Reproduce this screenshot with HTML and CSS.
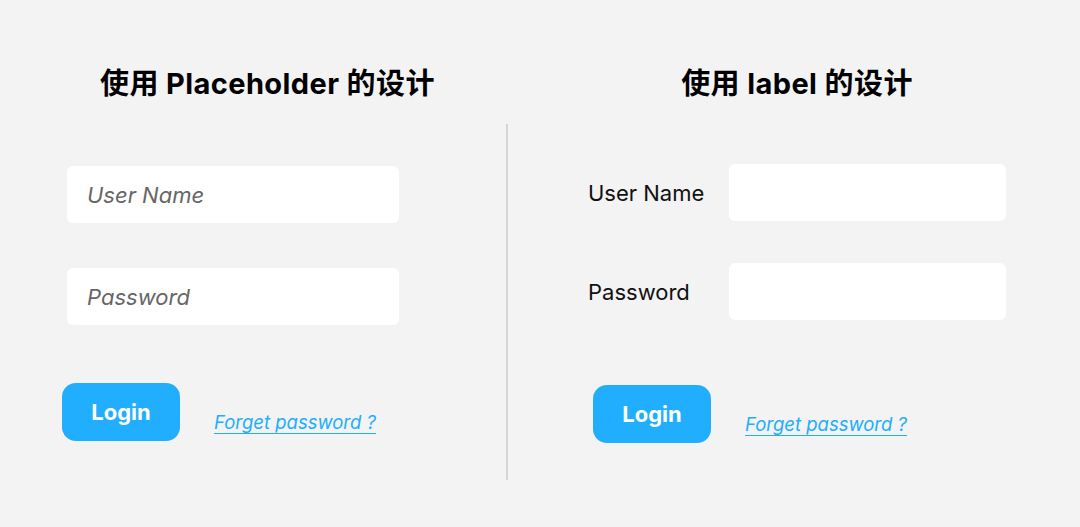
FILE: index.html
```html
<!DOCTYPE html>
<html lang="zh-CN">
<head>
  <meta charset="UTF-8" />
  <meta name="viewport" content="width=device-width, initial-scale=1.0"/>
  <title>Placeholder vs Label</title>
  <link rel="stylesheet" href="styles.css">
</head>
<body>
  <main class="compare">
    <section class="panel panel-placeholder">
      <h2 class="title">使用 Placeholder 的设计</h2>
      <div class="fields">
        <input class="field" type="text" placeholder="User Name">
        <input class="field" type="password" placeholder="Password">
      </div>
      <div class="actions">
        <button class="login">Login</button>
        <a class="forget" href="#">Forget password ?</a>
      </div>
    </section>

    <div class="divider"></div>

    <section class="panel panel-label">
      <h2 class="title">使用 label 的设计</h2>
      <div class="fields">
        <label class="row">
          <span class="label-text">User Name</span>
          <input class="field" type="text">
        </label>
        <label class="row">
          <span class="label-text">Password</span>
          <input class="field" type="password">
        </label>
      </div>
      <div class="actions">
        <button class="login">Login</button>
        <a class="forget" href="#">Forget password ?</a>
      </div>
    </section>
  </main>
</body>
</html>
```

FILE: styles.css
```css
:root {
  --bg: #f3f3f3;
  --text: #111;
  --muted: #666;
  --blue: #21aeff;
  --line: #d5d5d5;
}

body {
  margin: 0;
  padding: 0;
  height: 527px;
  overflow: hidden;
  background: var(--bg);
  color: var(--text);
  font-family: Inter, "Noto Sans CJK SC", sans-serif;
}

.compare {
  display: grid;
  grid-template-columns: 506px 2px 1fr;
  height: 100%;
}

.panel {
  display: flex;
  flex-direction: column;
  align-items: flex-start;
  padding-top: 66px;
}

.title {
  margin: 0;
  font-size: 29px;
  line-height: 35px;
  font-weight: 700;
  letter-spacing: 0.4px;
  color: #000;
}

.field {
  box-sizing: border-box;
  height: 57px;
  border: none;
  border-radius: 6px;
  background: #fff;
  padding: 0 20px;
  font-family: inherit;
  font-size: 22px;
  color: var(--text);
  outline: none;
}

.field::placeholder {
  color: var(--muted);
  font-style: italic;
}

.actions {
  display: flex;
  align-items: flex-start;
  gap: 34px;
}

.login {
  width: 118px;
  height: 58px;
  border: none;
  border-radius: 14px;
  background: var(--blue);
  color: #fff;
  font-family: inherit;
  font-size: 22px;
  font-weight: 700;
  cursor: pointer;
}

.forget {
  margin-top: 28px;
  font-size: 18.5px;
  line-height: 23px;
  font-style: italic;
  color: var(--blue);
  text-decoration: underline;
  text-underline-offset: 4px;
  text-decoration-thickness: 1px;
}

/* left: placeholder */
.panel-placeholder {
  padding-left: 62px;
}

.panel-placeholder .title {
  margin-left: 38px;
}

.panel-placeholder .fields {
  display: flex;
  flex-direction: column;
  gap: 45px;
  margin: 65px 0 0 5px;
}

.panel-placeholder .field {
  width: 332px;
}

.panel-placeholder .actions {
  margin-top: 58px;
}

/* middle line */
.divider {
  margin-top: 124px;
  height: 356px;
  background: var(--line);
}

/* right: label */
.panel-label {
  padding-left: 80px;
}

.panel-label .title {
  width: 418px;
  text-align: center;
}

.panel-label .fields {
  display: flex;
  flex-direction: column;
  gap: 42px;
  margin-top: 63px;
}

.row {
  display: flex;
  align-items: center;
}

.label-text {
  width: 141px;
  font-size: 22px;
  color: var(--text);
}

.panel-label .field {
  width: 277px;
}

.panel-label .actions {
  margin: 65px 0 0 5px;
}
```
